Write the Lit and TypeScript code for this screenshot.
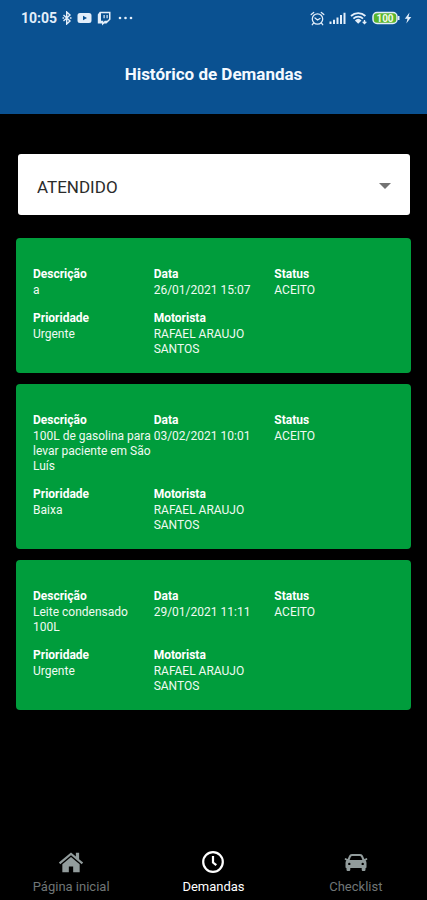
import { LitElement, html, css, svg } from "lit";
import { customElement, property, state } from "lit/decorators.js";
import { classMap } from "lit/directives/class-map.js";

interface Demand {
  description: string;
  date: string;
  status: string;
  priority: string;
  driver: string;
}

const DEMANDS: Demand[] = [
  { description: "a", date: "26/01/2021 15:07", status: "ACEITO", priority: "Urgente", driver: "RAFAEL ARAUJO SANTOS" },
  { description: "100L de gasolina para levar paciente em São Luís", date: "03/02/2021 10:01", status: "ACEITO", priority: "Baixa", driver: "RAFAEL ARAUJO SANTOS" },
  { description: "Leite condensado 100L", date: "29/01/2021 11:11", status: "ACEITO", priority: "Urgente", driver: "RAFAEL ARAUJO SANTOS" },
];

@customElement("status-bar")
export class StatusBar extends LitElement {
  static styles = css`
    :host {
      display: flex;
      justify-content: space-between;
      align-items: center;
      height: 36px;
      padding: 0 15px 0 21px;
      color: #e3eefa;
    }
    .group {
      display: flex;
      align-items: center;
      gap: 5px;
    }
    .right {
      gap: 4px;
    }
    .time {
      font-size: 14px;
      font-weight: 700;
      line-height: 16px;
    }
    svg {
      display: block;
    }
    .level {
      font-size: 10px;
      font-weight: 700;
      fill: #f2f9e8;
    }
  `;

  render() {
    return html`
      <div class="group">
        <span class="time">10:05</span>
        <svg width="10" height="14" viewBox="0 0 10 14" fill="none" stroke="currentColor" stroke-width="1.400">
          <path d="M1.500 4l6.500 6-3.300 3V1l3.300 3-6.500 6" />
          <path d="M.5 7h1.600M7.900 7h1.600" />
        </svg>
        <svg width="15" height="12" viewBox="0 0 15 12">
          <path fill="currentColor" fill-rule="evenodd" d="M3 1h9a2.500 2.500 0 0 1 2.500 2.500v5A2.500 2.500 0 0 1 12 11H3A2.500 2.500 0 0 1 .5 8.500v-5A2.500 2.500 0 0 1 3 1zm3 2.700v4.600L10 6z" />
        </svg>
        <svg width="14" height="15" viewBox="0 0 14 15">
          <path fill="currentColor" fill-rule="evenodd" d="M2.800.8H13.500v7.700l-4 4H7.200L5 14.600v-2.100H.8V3.600zM4 2.300v7.400h2.300v1.500l1.500-1.500h2.400L12 7.900V2.300zM6.500 4h1.200v3.300H6.500zm3 0h1.200v3.300H9.500z" />
        </svg>
        <svg width="18" height="4" viewBox="0 0 18 4" fill="currentColor">
          <circle cx="4" cy="2" r="1.300" /><circle cx="9.500" cy="2" r="1.300" /><circle cx="15" cy="2" r="1.300" />
        </svg>
      </div>
      <div class="group right">
        <svg width="15" height="15" viewBox="0 0 15 15" fill="none" stroke="currentColor" stroke-width="1.300" stroke-linecap="round">
          <circle cx="7.500" cy="8" r="5.200" />
          <path d="M1.200 3.500l2.500-2M13.800 3.500l-2.500-2M3.500 12.200l-1.200 1.500M11.500 12.200l1.200 1.500M5 7l2.500 2L10 7.500" />
        </svg>
        <svg width="17" height="13" viewBox="0 0 17 13" fill="currentColor">
          <path d="M.5 9.500h2V12h-2zM4 7.700h2V12H4zM7.500 5.500h2V12h-2zM11 3h2v9h-2zM14.500.8h2V12h-2z" />
        </svg>
        <svg width="18" height="14" viewBox="0 0 18 14" fill="none" stroke="currentColor" stroke-width="1.800">
          <path d="M1 5a10.500 10.500 0 0 1 14.400 0M3.400 7.600a7 7 0 0 1 9.600 0" />
          <path fill="currentColor" stroke="none" d="M8.200 12.800L4.900 9.400a4.800 4.800 0 0 1 6.600 0z" />
          <path stroke-width="1.300" d="M14.500 9v3.600M12.700 10.800L14.500 12.600l1.800-1.800" />
        </svg>
        <svg width="28" height="14" viewBox="0 0 28 14">
          <rect x="1" y="1.500" width="24" height="11" rx="4" fill="#58b52c" stroke="currentColor" stroke-width="1.500" />
          <path d="M26 5h1.500v4H26z" fill="currentColor" />
          <text class="level" x="13" y="10.500" text-anchor="middle">100</text>
        </svg>
        <svg width="8" height="12" viewBox="0 0 8 12" fill="currentColor">
          <path d="M5.500.5L.8 6.800h2.700L2.300 11.500 7.300 5H4.500z" />
        </svg>
      </div>
    `;
  }
}

@customElement("demand-card")
export class DemandCard extends LitElement {
  @property({ attribute: false }) demand!: Demand;

  static styles = css`
    :host {
      display: block;
      padding: 29px 16px 16px 17px;
      border-radius: 4px;
      background: #009d3c;
      color: #f0faf2;
      font-size: 12px;
      line-height: 15px;
    }
    .fields {
      display: grid;
      grid-template-columns: repeat(3, minmax(0, 1fr));
      row-gap: 13px;
      margin: 0;
    }
    dt {
      margin-bottom: 1px;
      font-weight: 700;
      color: #ffffff;
    }
    dd {
      margin: 0;
    }
  `;

  private field(label: string, value: string) {
    return html`<div><dt>${label}</dt><dd>${value}</dd></div>`;
  }

  render() {
    const d = this.demand;
    return html`
      <dl class="fields">
        ${this.field("Descrição", d.description)}
        ${this.field("Data", d.date)}
        ${this.field("Status", d.status)}
        ${this.field("Prioridade", d.priority)}
        ${this.field("Motorista", d.driver)}
      </dl>
    `;
  }
}

const homeIcon = svg`
  <path d="M12 3.200L.8 12.500l1.300 1.500L12 5.800 21.900 14l1.300-1.500L19.500 9.400V3.500h-3v3.400z" />
  <path d="M12 7.400L4 14v7.500h6v-5.300h4v5.300h6V14z" />`;
const clockIcon = svg`
  <circle cx="12" cy="12" r="9.800" fill="none" stroke="currentColor" stroke-width="2.200" />
  <path d="M12 6v6.500l3.300 2.700" fill="none" stroke="currentColor" stroke-width="2.200" />`;
const carIcon = svg`
  <path fill-rule="evenodd" d="M8 4h8c1.500 0 2.500.7 3 2l1.300 3 2.700-.9.300 1.700-1.700.8c.6.700.9 1.400.9 2.400v4.500l-1 .7v1.300c0 1-.6 1.500-1.500 1.500h-.8c-.9 0-1.500-.5-1.500-1.500V18H6.300v1.500c0 1-.6 1.500-1.500 1.500H4c-.9 0-1.500-.5-1.500-1.500v-1.300l-1-.7V13c0-1 .3-1.700.9-2.400l-1.700-.8L1 8.100 3.700 9 5 6c.5-1.300 1.500-2 3-2zm.2 2c-.7 0-1.100.3-1.400 1l-1.200 3h12.800l-1.200-3c-.3-.7-.7-1-1.400-1zM5.300 12.700a1.200 1.200 0 1 0 0 2.400 1.200 1.200 0 0 0 0-2.400zm13.400 0a1.200 1.200 0 1 0 0 2.400 1.200 1.200 0 0 0 0-2.400z" />`;

const TABS = [
  { label: "Página inicial", icon: homeIcon, size: 26 },
  { label: "Demandas", icon: clockIcon, size: 24 },
  { label: "Checklist", icon: carIcon, size: 24 },
];

@customElement("app-root")
export class AppRoot extends LitElement {
  @state() private activeTab = 1;

  static styles = css`
    :host {
      display: flex;
      flex-direction: column;
      min-height: 100vh;
      background: #000000;
      font-family: Roboto, "Liberation Sans", sans-serif;
    }
    header {
      background: #0a5191;
    }
    h1 {
      margin: 0;
      padding: 28px 0 30px;
      font-size: 17px;
      line-height: 20px;
      font-weight: 700;
      text-align: center;
      color: #f4f9ff;
    }
    main {
      flex: 1;
      padding: 40px 16px 24px;
    }
    .picker {
      display: grid;
      align-items: center;
      margin: 0 1px 23px 2px;
    }
    .picker > * {
      grid-area: 1 / 1;
    }
    select {
      appearance: none;
      width: 100%;
      height: 61px;
      padding: 4px 48px 0 19px;
      border: 0;
      border-radius: 3px;
      background: #ffffff;
      color: #2b2b2b;
      font: inherit;
      font-size: 17px;
    }
    .caret {
      justify-self: end;
      margin: 3px 19px 0 0;
      fill: #737373;
      pointer-events: none;
    }
    .cards {
      display: flex;
      flex-direction: column;
      gap: 11px;
    }
    nav {
      display: grid;
      grid-template-columns: repeat(3, 1fr);
      padding-bottom: 4px;
    }
    .tab {
      display: flex;
      flex-direction: column;
      align-items: center;
      gap: 3px;
      padding: 0;
      border: 0;
      background: none;
      color: #707676;
      font: inherit;
      font-size: 13px;
      line-height: 18px;
    }
    .icon {
      display: grid;
      place-items: center;
      height: 26px;
      color: #929c9c;
    }
    .icon svg {
      fill: currentColor;
    }
    .active,
    .active .icon {
      color: #ffffff;
    }
  `;

  render() {
    return html`
      <header>
        <status-bar></status-bar>
        <h1>Histórico de Demandas</h1>
      </header>
      <main>
        <div class="picker">
          <select aria-label="Status da demanda">
            <option>ATENDIDO</option>
          </select>
          <svg class="caret" width="12" height="6" viewBox="0 0 12 6"><path d="M0 0h12L6 6z" /></svg>
        </div>
        <div class="cards">
          ${DEMANDS.map((d) => html`<demand-card .demand=${d}></demand-card>`)}
        </div>
      </main>
      <nav>
        ${TABS.map(
          (tab, i) => html`
            <button class=${classMap({ tab: true, active: i === this.activeTab })} @click=${() => (this.activeTab = i)}>
              <span class="icon">
                <svg width=${tab.size} height=${tab.size} viewBox="0 0 24 24">${tab.icon}</svg>
              </span>
              ${tab.label}
            </button>
          `,
        )}
      </nav>
    `;
  }
}
